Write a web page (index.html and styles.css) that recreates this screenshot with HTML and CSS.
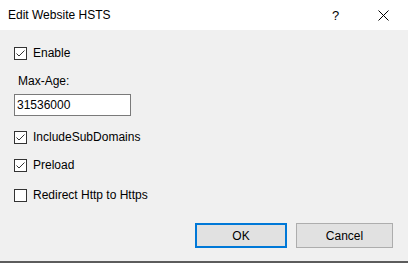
FILE: index.html
```html
<!DOCTYPE html>
<html lang="en">
<head>
  <meta charset="UTF-8" />
  <title>Edit Website HSTS</title>
  <link rel="stylesheet" href="styles.css">
</head>
<body>
  <div class="dialog">
    <div class="titlebar">
      <span class="title">Edit Website HSTS</span>
      <span class="help">?</span>
      <span class="close">
        <svg width="11" height="11" viewBox="0 0 11 11"><path d="M0.5 0.5 L10.5 10.5 M10.5 0.5 L0.5 10.5" stroke="#000" stroke-width="1" fill="none"/></svg>
      </span>
    </div>

    <div class="content">
      <label class="check row-enable">
        <span class="box"><svg width="11" height="11" viewBox="0 0 11 11"><path d="M1.5 5.5 L4 8 L9.5 2.5" stroke="#333" stroke-width="1" fill="none"/></svg></span>
        Enable
      </label>

      <div class="field-label">Max-Age:</div>
      <div class="input">31536000</div>

      <label class="check row-sub">
        <span class="box"><svg width="11" height="11" viewBox="0 0 11 11"><path d="M1.5 5.5 L4 8 L9.5 2.5" stroke="#333" stroke-width="1" fill="none"/></svg></span>
        IncludeSubDomains
      </label>
      <label class="check row-preload">
        <span class="box"><svg width="11" height="11" viewBox="0 0 11 11"><path d="M1.5 5.5 L4 8 L9.5 2.5" stroke="#333" stroke-width="1" fill="none"/></svg></span>
        Preload
      </label>
      <label class="check row-redirect">
        <span class="box"></span>
        Redirect Http to Https
      </label>

      <div class="buttons">
        <button class="btn btn-default">OK</button>
        <button class="btn">Cancel</button>
      </div>
    </div>
  </div>
</body>
</html>
```

FILE: styles.css
```css
body {
  margin: 0;
  font-family: "Liberation Sans", Arial, sans-serif;
  font-size: 12px;
  color: #000;
  background: #f0f0f0;
}
.dialog {
  width: 408px;
  height: 263px;
  display: flex;
  flex-direction: column;
  box-sizing: border-box;
  border-bottom: 2px solid #5c5c5c;
}
.titlebar {
  height: 30px;
  background: #fff;
  display: flex;
  align-items: center;
  padding-left: 8px;
  flex-shrink: 0;
}
.title {
  flex: 1;
}
.help {
  width: 12px;
  margin-right: 34px;
  font-size: 13px;
}
.close {
  width: 11px;
  margin-right: 19px;
  display: flex;
}
.content {
  flex: 1;
  padding: 0 14px;
  display: flex;
  flex-direction: column;
}
.check {
  display: flex;
  align-items: center;
  height: 16px;
  line-height: 16px;
}
.box {
  width: 11px;
  height: 11px;
  border: 1px solid #333;
  background: #fff;
  margin-right: 6px;
  display: flex;
}
.row-enable {
  margin-top: 15px;
}
.field-label {
  margin-top: 12px;
  margin-left: 4px;
  height: 16px;
  line-height: 16px;
}
.input {
  margin-top: 5px;
  height: 20px;
  border: 1px solid #7a7a7a;
  background: #fff;
  line-height: 20px;
  padding-left: 2px;
  width: 113px;
}
.row-sub {
  margin-top: 13px;
}
.row-preload {
  margin-top: 12px;
}
.row-redirect {
  margin-top: 14px;
}
.buttons {
  margin-top: auto;
  margin-bottom: 13px;
  display: flex;
  justify-content: flex-end;
  gap: 9px;
  padding-right: 1px;
}
.btn {
  width: 97px;
  height: 25px;
  background: #e1e1e1;
  border: 1px solid #adadad;
  font-family: inherit;
  font-size: 12px;
  color: #000;
  padding: 0;
}
.btn-default {
  border: 2px solid #0078d7;
  width: 92px;
}
```
